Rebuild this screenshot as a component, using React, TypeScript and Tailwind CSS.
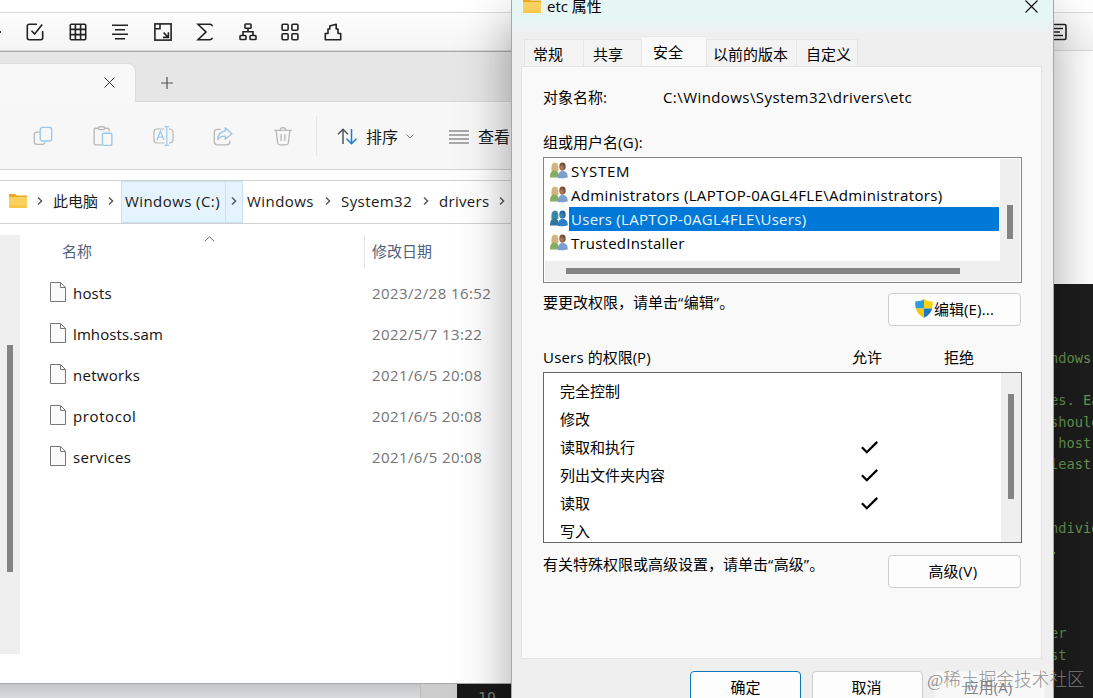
import type { ReactNode } from "react";

const UI = "font-['Open_Sans','Noto_Sans_CJK_SC',sans-serif]";

function Icon({ children, size = 18, className = "", stroke = 1.6 }: { children: ReactNode; size?: number; className?: string; stroke?: number }) {
  return (
    <svg width={size} height={size} viewBox="0 0 18 18" fill="none" stroke="currentColor" strokeWidth={stroke} className={`shrink-0 ${className}`}>
      {children}
    </svg>
  );
}

const editorIcons: ReactNode[] = [
  <><path d="M11 1.3H3.2C2 1.3 1.3 2 1.3 3.2v11.6c0 1.2.7 1.9 1.9 1.9h11.6c1.2 0 1.9-.7 1.9-1.9V8" /><path d="M5.5 7.8 8.6 11l7.6-9.6" /></>,
  <><rect x="1.3" y="1.3" width="15.4" height="15.4" rx="1" /><path d="M6.4 1v16M11.6 1v16M1 6.4h16M1 11.6h16" /></>,
  <path d="M1 2.2h16M4 6.7h10M1 11.2h16M4 15.8h10" />,
  <><rect x=".9" y=".9" width="16.2" height="16.2" /><path d="M1 5.7h5V1M9.6 9.6l4.6 4.6M14.4 9.2v5.2H9" /></>,
  <path d="M16.5 3.2C16 2 15.3 1.3 14 1.3H2L10 9l-8 7.7h12c1.3 0 2-.7 2.5-1.9" />,
  <><rect x="6" y="1" width="6" height="4.2" rx=".8" /><path d="M9 5.2v3.5M4 12.5V8.8h10v3.7" /><rect x="1" y="12.5" width="6" height="4" rx=".8" /><rect x="11" y="12.5" width="6" height="4" rx=".8" /></>,
  <><rect x="1.1" y="1.3" width="6" height="6" rx="1" /><rect x="10.9" y="1.3" width="6" height="6" rx="1" /><rect x="1.1" y="10.7" width="6" height="6" rx="1" /><rect x="10.9" y="10.7" width="6" height="6" rx="1" /></>,
  <path strokeLinejoin="round" d="M1.300 16.700V10.500H4V6H5.800V3L12.200 1.200V6H14V10.500H16.700V16.700Z" />,
];

function EditorToolbar() {
  return (
    <div className="flex h-[39px] w-[1093px] items-center border-y border-[#d9dadd] bg-linear-to-b from-[#fdfdfd] to-[#f5f5f6] text-[#222]">
      <div className="h-[2px] w-[1px] bg-[#333]" />
      <div className="ml-[13.2px] flex grow">
        {editorIcons.map((d, i) => (
          <div key={i} className="flex w-[42.5px] justify-center"><Icon>{d}</Icon></div>
        ))}
      </div>
      <Icon className="mr-[26px]">
        <rect x="1" y="1.5" width="16" height="15" rx="1.5" /><path d="M4 5.5h10M4 9h7M4 12.5h10" />
      </Icon>
    </div>
  );
}

const commentLines = ["ndows", "", "es. Each", "should", " host name", "least one", "", "", "ndividual", ".", "", "", "", "er", "st"];

function CodePane() {
  return (
    <div className="absolute top-[284px] left-[1042px] h-[414px] w-[51px] overflow-hidden bg-[#1d1d1d] pt-[64px] pl-[8px] font-['DejaVu_Sans_Mono',monospace] text-[13.7px] leading-[21.2px] whitespace-pre text-[#659650]">
      {commentLines.map((line, i) => <div key={i} className="h-[21.2px]">{line}</div>)}
    </div>
  );
}

function Folder() {
  return (
    <svg width="18" height="14" viewBox="0 0 18 14" className="shrink-0">
      <path d="M0 1C0 .4.4 0 1 0h5.2l1.6 1.6H17c.6 0 1 .4 1 1V6H0z" fill="#e9ab1d" />
      <rect y="3" width="18" height="11" rx="1" fill="#fcd05e" />
      <path d="M0 11.5h18V13c0 .6-.4 1-1 1H1c-.6 0-1-.4-1-1z" fill="#f8c647" />
    </svg>
  );
}

function Chevron() {
  return (
    <svg width="6" height="8" viewBox="0 0 6 8" fill="none" stroke="#555" strokeWidth="1.4" className="shrink-0"><path d="m1 .6 3.600 3.400L1 7.400" /></svg>
  );
}

function ExplorerTabs() {
  return (
    <div className="flex h-[50px] items-end bg-[#e6e6e6]">
      <div className="flex h-[39px] w-[136px] items-center justify-end rounded-tr-[8px] border-t border-r border-[#dcdcdc] bg-[#f8f8f8] pr-[20px]">
        <svg width="11" height="11" viewBox="0 0 11 11" stroke="#333" className="mb-[2px]"><path d="m.5.5 10 10M10.5.5l-10 10" /></svg>
      </div>
      <div className="flex h-[39px] grow items-center border-b border-[#d9d9d9] pt-[1px] pl-[25px]">
        <svg width="12" height="12" viewBox="0 0 12 12" stroke="#555" strokeWidth="1.2"><path d="M6 0v12M0 6h12" /></svg>
      </div>
    </div>
  );
}

const G = "#b9b9b9";
const B = "#9ac7ea";

function CommandBar() {
  return (
    <div className="flex h-[68px] items-center border-b border-[#d2d2d6] bg-[#f7f7f7] text-[15px] text-[#1a1a1a]">
      <div className="flex w-[316px] pl-[13px]">
        <div className="flex w-[60px] justify-center">
          <Icon size={20} stroke={1.2}><path d="M6.2 5.5H3.5C2 5.5 1.2 6.3 1.2 7.8v6.4c0 1.5.8 2.3 2.3 2.3h5c1.4 0 2.1-.6 2.3-1.8" stroke={G} /><rect x="6.5" y="1.2" width="10.3" height="12.3" rx="2" stroke={B} /></Icon>
        </div>
        <div className="flex w-[60px] justify-center">
          <Icon size={20} stroke={1.2}><path d="M8 17H2.5C1.6 17 1 16.4 1 15.5V3.5C1 2.6 1.6 2 2.5 2H5M10.5 2H13c.9 0 1.5.6 1.5 1.5V5" stroke={G} /><rect x="5" y=".7" width="5.5" height="2.6" rx="1.2" stroke={G} /><rect x="8.5" y="6.5" width="8.5" height="11" rx="1.2" stroke={B} /></Icon>
        </div>
        <div className="flex w-[60px] justify-center">
          <svg width="21" height="20" viewBox="0 0 21 20" fill="none" strokeWidth="1.2"><path d="M11.5 3H4C2 3 1 4 1 6v8c0 2 1 3 3 3h7.5M16 3c3 0 4 1 4 3v8c0 2-1 3-4 3" stroke={G} /><path d="m4 14 3.500-9L11 14M5.200 11h4.600M13.800 1v18M11.500.7h4.600M11.500 19.300h4.600" stroke={B} /></svg>
        </div>
        <div className="flex w-[60px] justify-center">
          <Icon size={20} stroke={1.2}><path d="M7 3H4C2.200 3 1.200 4 1.200 5.800v8.400C1.200 16 2.200 17 4 17h8.400c1.800 0 2.800-1 2.800-2.800V13" stroke={G} /><path d="M11 1.500 17 7l-6 5V9.200C7.800 9 5.800 10 4.200 12.300 4.500 8 6.800 5 11 4.500z" stroke={B} strokeLinejoin="round" /></Icon>
        </div>
        <div className="flex w-[60px] justify-center">
          <Icon size={20} stroke={1.2}><path d="M1 4h16M6.500 3.800c0-3.200 5-3.200 5 0M2.800 4l1.400 11.300c.2 1.100.8 1.700 1.900 1.700h5.800c1.100 0 1.700-.6 1.900-1.700L15.200 4M7.300 7.500v6M10.700 7.500v6" stroke={G} /></Icon>
        </div>
      </div>
      <div className="h-[40px] w-px bg-[#e4e4e4]" />
      <svg width="21" height="17" viewBox="0 0 21 17" fill="none" strokeWidth="1.5" className="mt-[2px] ml-[20px]"><path d="M6 16V1M1 6.200l5-5 5 5" stroke="#555" /><path d="M14.500 1v15M9.500 10.800l5 5 5-5" stroke="#187cc9" /></svg>
      <span className="mt-[2px] ml-[8px] w-[32px] text-[16px]">排序</span>
      <svg width="8" height="5" viewBox="0 0 8 5" fill="none" stroke="#777" className="mt-px ml-[8px]"><path d="m.5.5 3.500 3.500L7.500.5" /></svg>
      <svg width="20" height="14" viewBox="0 0 20 14" stroke="#5b5b5b" strokeWidth="1.2" className="mt-[2px] ml-[35px]"><path d="M0 1h20M0 5h20M0 9h20M0 13h20" /></svg>
      <span className="mt-[2px] ml-[9px] whitespace-nowrap text-[16px]">查看</span>
    </div>
  );
}

function AddressBar() {
  return (
    <div className="mt-[10px] flex h-[44px] items-center border-y border-[#d2d2d2] bg-white text-[15px] whitespace-nowrap text-[#1a1a1a]">
      <div className="flex w-[53px] items-center gap-[10px] pb-[2px] pl-[9px]"><Folder /><Chevron /></div>
      <div className="flex w-[68px] items-center gap-[10px] pb-[2px]"><span>此电脑</span><Chevron /></div>
      <div className="flex h-[42px] w-[104px] items-center border border-r-0 border-[#c8e2f2] bg-[#e5f3fd] pb-[2px] pl-[3px] tracking-[0.42px]">Windows (C:)</div>
      <div className="flex h-[42px] w-[18px] items-center justify-center border border-[#c8e2f2] bg-[#e5f3fd] pb-[2px]"><Chevron /></div>
      <div className="flex w-[98px] items-center pb-[2px] pl-[4px]"><span className="w-[78px] tracking-[0.43px]">Windows</span><Chevron /></div>
      <div className="flex w-[98px] items-center pb-[2px]"><span className="w-[82px] tracking-[0.43px]">System32</span><Chevron /></div>
      <div className="flex items-center pb-[2px]"><span className="w-[60px] tracking-[0.3px]">drivers</span><Chevron /></div>
    </div>
  );
}

const files = [
  { name: "hosts", date: "2023/2/28 16:52", text: "tracking-[0.2px]" },
  { name: "lmhosts.sam", date: "2022/5/7 13:22", text: "tracking-[0.1px]" },
  { name: "networks", date: "2021/6/5 20:08", text: "tracking-[0.3px]" },
  { name: "protocol", date: "2021/6/5 20:08", text: "tracking-[0.6px]" },
  { name: "services", date: "2021/6/5 20:08", text: "tracking-[0.3px]" },
];

function FileList() {
  return (
    <div className="flex pt-[11px] text-[15px] whitespace-nowrap">
      <div className="h-[419px] w-[20px] bg-[#efefef] pt-[110px] pl-[7px]"><div className="h-[227px] w-[6px] bg-[#848484]" /></div>
      <div className="grow">
        <div className="flex h-[38px] text-[#4e6280]">
          <div className="flex h-[33px] w-[345px] items-center border-r border-[#e3e3e3] pl-[42px]">
            <span className="w-[142px]">名称</span>
            <svg width="11" height="6" viewBox="0 0 11 6" fill="none" stroke="#666" className="mb-[26px]"><path d="m.8 5.300 4.700-4.500 4.700 4.500" /></svg>
          </div>
          <div className="flex h-[33px] items-center pl-[7px]">修改日期</div>
        </div>
        {files.map((f) => (
          <div key={f.name} className="flex h-[41px] items-center pl-[30px]">
            <svg width="16" height="20" viewBox="0 0 16 20" fill="#fafafa" stroke="#777" className="mb-[3px]"><path d="M.5.5h10l5 5v14H.5zM10.500.5v5h5" /></svg>
            <span className={`ml-[7px] w-[299px] text-[#111] ${f.text}`}>{f.name}</span>
            <span className="tracking-[0.4px] text-[#757575]">{f.date}</span>
          </div>
        ))}
      </div>
    </div>
  );
}

function Explorer() {
  return (
    <div className="absolute top-[51px] left-0 h-[633px] w-[512px] overflow-hidden border-y border-[#a9a9a9] bg-white">
      <ExplorerTabs />
      <CommandBar />
      <AddressBar />
      <FileList />
    </div>
  );
}

function People({ selected = false }: { selected?: boolean }) {
  const c = selected
    ? ["#3d8ab0", "#2f86a8", "#3475a0", "#2268a5", "#2b7fcb"]
    : ["#cdbb74", "#dcae88", "#86ab62", "#76533c", "#7a9fd0"];
  return (
    <svg width="18" height="17" viewBox="0 0 18 17" className="shrink-0">
      <path d="M1.500 9C1 3 2 .7 5 .7S8.600 3 8.200 9z" fill={c[0]} />
      <ellipse cx="5" cy="5" rx="2.100" ry="2.900" fill={c[1]} />
      <path d="M0 15.500C0 11 1.300 8.500 4.500 8.500S9 11 9.200 15.500z" fill={c[2]} />
      <ellipse cx="12.500" cy="4.600" rx="3.200" ry="4" fill={c[3]} />
      <ellipse cx="11.800" cy="5.800" rx="2" ry="2.700" fill={selected ? "#3f82aa" : "#a97650"} />
      <path d="M8 16c0-4.300 1.200-7 4.700-7s5 2.500 5.100 6.300C15 16.500 11 16.500 8 16z" fill={c[4]} />
    </svg>
  );
}

function Shield() {
  return (
    <svg width="18" height="19" viewBox="0 0 18 19" className="shrink-0">
      <path d="M9 .3C6.500 1.800 3.500 2.500.3 2.500c-.2 2.600 0 4.800.5 7H9z" fill="#2a9fe0" />
      <path d="M9 .3c2.500 1.500 5.500 2.200 8.700 2.200.2 2.600 0 4.800-.5 7H9z" fill="#fbd40d" />
      <path d="M.8 9.500C1.800 13.500 4.500 16.700 9 18.700V9.500z" fill="#f5c60f" />
      <path d="M17.200 9.500c-1 4-3.700 7.200-8.200 9.200V9.500z" fill="#1a78c8" />
    </svg>
  );
}

const button = "flex h-[33px] items-center justify-center rounded-[4px] border border-[#cfcfcf] bg-[#fdfdfd] pb-[2px]";

function Tab({ children, className }: { children: ReactNode; className: string }) {
  return <div className={`flex h-[27px] items-center border-t border-r border-[#e6e6e6] bg-[#f3f3f3] pt-[2px] ${className}`}>{children}</div>;
}

const groups = [
  { name: "SYSTEM", text: "tracking-[0.7px]" },
  { name: "Administrators (LAPTOP-0AGL4FLE\\Administrators)", text: "tracking-[0.34px]" },
  { name: "Users (LAPTOP-0AGL4FLE\\Users)", text: "tracking-[0.28px]", selected: true },
  { name: "TrustedInstaller", text: "tracking-[0.22px]" },
];

function GroupList() {
  return (
    <div className="h-[126px] w-[479px] border border-[#858585] bg-white p-px">
      <div className="flex h-[102px]">
        <div className="w-[455px]">
          {groups.map((g) => (
            <div key={g.name} className="flex h-[24px] items-center">
              <div className="w-[24px] pb-[2px] pl-[5px]"><People selected={g.selected} /></div>
              <div className={`flex h-[24px] grow items-center pl-[2px] ${g.text} ${g.selected ? "bg-[#0078d7] text-[#e8f4ff]" : ""}`}>{g.name}</div>
            </div>
          ))}
        </div>
        <div className="ml-px w-[20px] bg-[#efefef] pt-[46px] pl-[7px]"><div className="h-[34px] w-[6px] bg-[#848484]" /></div>
      </div>
      <div className="h-[20px] bg-[#efefef] pt-[7px] pl-[21px]"><div className="h-[6px] w-[394px] bg-[#848484]" /></div>
    </div>
  );
}

const permissions: [string, boolean][] = [["完全控制", false], ["修改", false], ["读取和执行", true], ["列出文件夹内容", true], ["读取", true], ["写入", false]];

function PermissionList() {
  return (
    <div className="flex h-[171px] w-[479px] overflow-hidden border border-[#666] bg-white">
      <div className="w-[457px] pt-[4px] pl-[16px]">
        {permissions.map(([name, allowed]) => (
          <div key={name} className="flex h-[28px] items-center">
            <span className="w-[301px]">{name}</span>
            {allowed && <svg width="17" height="13" viewBox="0 0 17 13" fill="none" stroke="#000" strokeWidth="2.2"><path d="m.9 6.300 4.900 4.900L16.200.9" /></svg>}
          </div>
        ))}
      </div>
      <div className="w-[20px] bg-[#efefef] pt-[21px] pl-[7px]"><div className="h-[105px] w-[6px] bg-[#848484]" /></div>
    </div>
  );
}

function PropertiesDialog() {
  return (
    <div className="absolute top-[-21px] left-[511px] h-[760px] w-[543px] border border-[#a8a8a8] bg-[#efefef] text-[15px] leading-[20px] whitespace-nowrap text-black shadow-[0_40px_48px_rgba(0,0,0,0.36)]">
      <div className="flex h-[56px] items-center bg-linear-to-b from-[#e6f6f5] from-70% to-[#efefef] to-95% pb-[4px] pl-[11px]">
        <div className="pb-[1px]"><Folder /></div>
        <span className="ml-[6px] grow">etc 属性</span>
        <svg width="13" height="13" viewBox="0 0 13 13" stroke="#111" strokeWidth="1.2" className="mt-px mr-[15px]"><path d="m.5.5 12 12M12.500.5l-12 12" /></svg>
      </div>
      <div className="flex h-[30px] items-end pl-[12px]">
        <Tab className="w-[60px] border-l pl-[8px]">常规</Tab>
        <Tab className="w-[58px] pl-[9px]">共享</Tab>
        <div className="flex h-[30px] w-[64px] items-center border-t border-[#e6e6e6] bg-[#f9f9f9] pl-[11px]">安全</div>
        <Tab className="w-[91px] border-l pl-[6px]">以前的版本</Tab>
        <Tab className="w-[61px] pl-[9px]">自定义</Tab>
      </div>
      <div className="ml-[9px] h-[593px] w-[521px] border border-[#e3e3e3] bg-[#f9f9f9] pl-[21px]">
        <div className="flex h-[60px] items-center"><span className="w-[120px]">对象名称:</span><span className="tracking-[0.42px]">C:\Windows\System32\drivers\etc</span></div>
        <div className="flex h-[30px] items-center">组或用户名<span className="tracking-[0.3px]">(G):</span></div>
        <GroupList />
        <div className="flex h-[54px] w-[478px] items-start justify-between pt-[10px]">
          <span className="-mt-px">要更改权限，请单击<span className="tracking-[0.4px] font-['Open_Sans']">“</span>编辑<span className="tracking-[0.4px] font-['Open_Sans']">”</span>。</span>
          <div className={`${button} w-[133px]`}><Shield /><span className="ml-px">编辑<span className="tracking-[0.2px]">(E)...</span></span></div>
        </div>
        <div className="flex h-[35px] items-center pt-[4px]"><span className="w-[309px]"><span className="tracking-[0.2px]">Users</span> 的权限(P)</span><span className="w-[92px]">允许</span><span>拒绝</span></div>
        <PermissionList />
        <div className="flex w-[478px] items-start justify-between pt-[12px]">
          <span className="-mt-px">有关特殊权限或高级设置，请单击<span className="tracking-[0.4px] font-['Open_Sans']">“</span>高级<span className="tracking-[0.4px] font-['Open_Sans']">”</span>。</span>
          <div className={`${button} w-[133px] pr-[3px]`}>高级<span className="tracking-[0.4px]">(V)</span></div>
        </div>
      </div>
      <div className="flex gap-[11px] pt-[12px] pl-[178px]">
        <div className={`${button} w-[111px] border-[#0a77b8]!`}>确定</div>
        <div className={`${button} w-[111px] pr-[2px]`}>取消</div>
        <div className={`${button} w-[111px] border-[#f3f3f3]! bg-[#f8f8f8]! pr-[3px] text-[#808080]`}>应用(A)</div>
      </div>
    </div>
  );
}

export default function App() {
  return (
    <div className={`relative h-[698px] w-[1093px] overflow-hidden bg-white pt-[12px] ${UI}`}>
      <EditorToolbar />
      <CodePane />
      <div className="absolute top-[684px] left-0 flex h-[14px] w-[512px] overflow-hidden bg-linear-to-b from-[#c4c5c6] to-[#d9dadb]">
        <div className="w-[421px] border-r border-[#bbb]" />
        <div className="w-[36px] bg-[#ccc]" />
        <div className="grow bg-[#181818] pt-[4px] pl-[21px] font-['DejaVu_Sans_Mono',monospace] text-[15px] text-[#777]">19</div>
      </div>
      <Explorer />
      <PropertiesDialog />
      <div className="absolute top-[668px] left-[927px] text-[17.7px] leading-[24px] font-light whitespace-nowrap text-[#858585]/90 font-['Liberation_Serif','Noto_Sans_CJK_SC',serif]">@稀土掘金技术社区</div>
    </div>
  );
}
